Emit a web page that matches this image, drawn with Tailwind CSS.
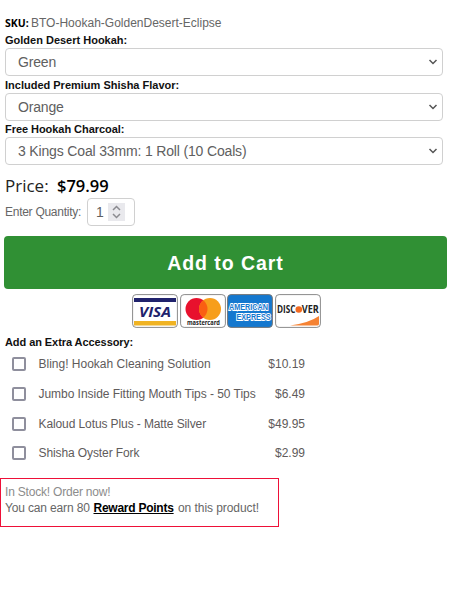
<!DOCTYPE html>
<html lang="en">
<head>
<meta charset="utf-8">
<title>Product options</title>
<script src="https://cdn.jsdelivr.net/npm/@tailwindcss/browser@4"></script>
</head>
<body class="h-[590px] w-[450px] overflow-hidden bg-white font-['Liberation_Sans',Arial,sans-serif] text-[12px] leading-[16px] text-[#666]">
<main class="flex flex-col pt-[15px]">
  <p class="h-[17px] pl-[5px] whitespace-nowrap"><span class="inline-block w-[26px] font-['Open_Sans',sans-serif] text-[10.5px] font-bold text-black">SKU:</span>BTO-Hookah-GoldenDesert-Eclipse</p>

  <label class="h-[16px] pl-[5px] text-[11px] font-bold text-[#111]">Golden Desert Hookah:</label>
  <div class="ml-[4.500px] flex h-[28px] w-[438px] items-center justify-between rounded-[4px] border-[1.5px] border-[#d0d0d0] pr-[4px] pl-[12.500px] text-[14px] tracking-[-0.18px] text-[#606060]">
    <span>Green</span>
    <svg class="h-[6px] w-[10px]" viewBox="0 0 10 6" fill="none" stroke="#555" stroke-width="1.5"><path d="M1.5 1 5 4.5 8.500 1"/></svg>
  </div>

  <label class="mt-[1px] h-[16px] pl-[5px] text-[11px] font-bold text-[#111]">Included Premium Shisha Flavor:</label>
  <div class="ml-[4.500px] flex h-[28px] w-[438px] items-center justify-between rounded-[4px] border-[1.5px] border-[#d0d0d0] pr-[4px] pl-[12.500px] text-[14px] tracking-[-0.18px] text-[#606060]">
    <span>Orange</span>
    <svg class="h-[6px] w-[10px]" viewBox="0 0 10 6" fill="none" stroke="#555" stroke-width="1.5"><path d="M1.5 1 5 4.5 8.500 1"/></svg>
  </div>

  <label class="h-[16px] pl-[5px] text-[11px] font-bold tracking-[-0.05px] text-[#111]">Free Hookah Charcoal:</label>
  <div class="ml-[4.500px] flex h-[28px] w-[438px] items-center justify-between rounded-[4px] border-[1.5px] border-[#d0d0d0] pr-[4px] pl-[12.500px] text-[14px] tracking-[-0.16px] text-[#606060]">
    <span>3 Kings Coal 33mm: 1 Roll (10 Coals)</span>
    <svg class="h-[6px] w-[10px]" viewBox="0 0 10 6" fill="none" stroke="#555" stroke-width="1.5"><path d="M1.5 1 5 4.5 8.500 1"/></svg>
  </div>

  <p class="mt-[9px] flex h-[24px] pl-[5px] font-['Open_Sans',sans-serif] text-[17px] leading-[24px] text-[#222]"><span class="w-[52px] font-medium">Price:</span><span class="text-[16.5px] font-semibold text-black">$79.99</span></p>

  <div class="flex h-[28px] items-center pl-[5px]">
    <span class="w-[82px] tracking-[-0.27px]">Enter Quantity:</span>
    <div class="flex h-[28px] w-[48px] items-center rounded-[4px] border-[1.5px] border-[#d0d0d0] pl-[8px] text-[14px] text-[#606060]">
      <span class="w-[12px]">1</span>
      <span class="flex h-[18px] w-[17px] items-center justify-center bg-[#e9e9ed]">
        <svg class="h-[14px] w-[9px]" viewBox="0 0 9 14" fill="none" stroke="#8b8b90" stroke-width="1.5"><path d="M1 5 4.500 1.500 8 5M1 9 4.500 12.500 8 9"/></svg>
      </span>
    </div>
  </div>

  <button class="mt-[10px] ml-[4px] flex h-[53px] w-[443px] items-center justify-center rounded-[4px] bg-[#309034] text-[19.5px] font-bold tracking-[0.95px] text-white">Add to Cart</button>

  <div class="mt-[5px] ml-[132px] flex h-[34px] gap-[1.500px]">
    <svg class="h-[34px] w-[46px]" viewBox="0 0 46 34"><rect x=".6" y=".6" width="44.800" height="32.800" rx="3.500" fill="#fff" stroke="#8b8b8b"/><path d="M2 4h42v4H2z" fill="#20226c"/><path d="M2 27h42v4.500H2z" fill="#f0b323"/><text x="7" y="22.500" font-family="Open Sans" font-size="14.500" font-weight="700" font-style="italic" fill="#20226c" textLength="32" lengthAdjust="spacingAndGlyphs">VISA</text></svg>
    <svg class="h-[34px] w-[46px]" viewBox="0 0 46 34"><rect x=".6" y=".6" width="44.800" height="32.800" rx="3.500" fill="#fff" stroke="#8b8b8b"/><circle cx="16.500" cy="15" r="11" fill="#e8112d"/><circle cx="30" cy="15" r="11" fill="#f79e1b"/><path d="M23.250 6.300a11 11 0 0 1 0 17.400 11 11 0 0 1 0-17.400" fill="#fa5f12"/><text x="7" y="31" font-family="Open Sans" font-size="6.500" font-weight="700" fill="#222" textLength="33" lengthAdjust="spacingAndGlyphs">mastercard</text></svg>
    <svg class="h-[34px] w-[46px] overflow-visible" viewBox="0 0 46 34"><rect x=".6" y=".6" width="44.800" height="32.800" rx="3.500" fill="#1478cf" stroke="#777"/><g font-family="Liberation Sans" font-size="8.500" font-weight="700" fill="#1478cf" stroke="#fff" stroke-width="1.900" paint-order="stroke"><text x="2" y="16" textLength="39" lengthAdjust="spacingAndGlyphs">AMERICAN</text><text x="9.500" y="25.500" textLength="34" lengthAdjust="spacingAndGlyphs">EXPRESS</text></g></svg>
    <svg class="h-[34px] w-[46px]" viewBox="0 0 46 34"><rect x=".6" y=".6" width="44.800" height="32.800" rx="3.500" fill="#fff" stroke="#8b8b8b"/><path d="M15 31.500Q34 29 44 22v8q0 1.500-2 1.500z" fill="#f58233"/><circle cx="23.800" cy="15.500" r="3.300" fill="#f26a21"/><g font-family="Open Sans" font-size="10.500" font-weight="700" fill="#222"><text x="2" y="19.300" textLength="18.500" lengthAdjust="spacingAndGlyphs">DISC</text><text x="26.800" y="19.300" textLength="17" lengthAdjust="spacingAndGlyphs">VER</text></g></svg>
  </div>

  <h2 class="mt-[6px] h-[15px] pl-[5px] text-[11px] font-bold tracking-[-0.07px] text-[#111]">Add an Extra Accessory:</h2>

  <ul class="flex w-[305px] flex-col pl-[12px] text-[#605b5b]">
    <li class="flex h-[30px] items-center"><span class="mr-[12.500px] h-[14px] w-[14px] rounded-[2px] border-2 border-[#8f8f9d]"></span><span class="grow">Bling! Hookah Cleaning Solution</span><span>$10.19</span></li>
    <li class="flex h-[30px] items-center"><span class="mr-[12.500px] h-[14px] w-[14px] rounded-[2px] border-2 border-[#8f8f9d]"></span><span class="grow tracking-[-0.04px]">Jumbo Inside Fitting Mouth Tips - 50 Tips</span><span>$6.49</span></li>
    <li class="flex h-[29px] items-center"><span class="mr-[12.500px] h-[14px] w-[14px] rounded-[2px] border-2 border-[#8f8f9d]"></span><span class="grow tracking-[-0.1px]">Kaloud Lotus Plus - Matte Silver</span><span>$49.95</span></li>
    <li class="flex h-[29px] items-center"><span class="mr-[12.500px] h-[14px] w-[14px] rounded-[2px] border-2 border-[#8f8f9d]"></span><span class="grow tracking-[-0.1px]">Shisha Oyster Fork</span><span>$2.99</span></li>
  </ul>

  <section class="mt-[11px] h-[49px] w-[279px] border border-[#ee1038] pt-[5px] pl-[4px] whitespace-nowrap">
    <p class="tracking-[-0.2px] text-[#8c8c8c]">In Stock! Order now!</p>
    <p class="flex"><span class="w-[88.500px] tracking-[-0.15px]">You can earn 80</span><a class="w-[84.500px] tracking-[-0.25px] font-bold text-black underline">Reward Points</a><span class="tracking-[-0.06px]">on this product!</span></p>
  </section>
</main>
</body>
</html>
